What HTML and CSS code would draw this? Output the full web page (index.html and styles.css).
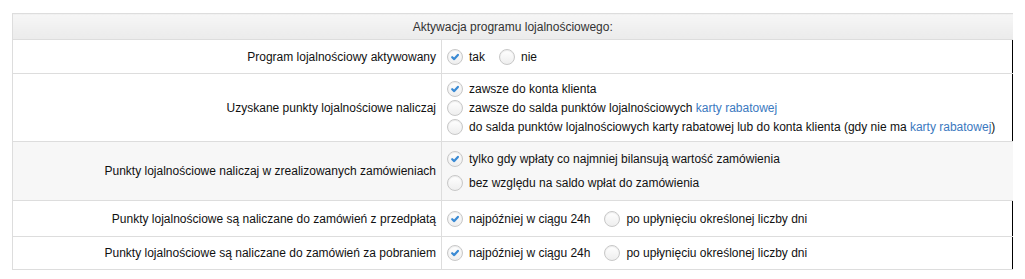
FILE: index.html
```html
<!DOCTYPE html>
<html lang="pl">
<head>
    <meta charset="UTF-8">
    <title>Program lojalnościowy</title>
    <link rel="stylesheet" href="styles.css">
</head>
<body>
    <div class="settings">
        <table class="settings-table">
            <colgroup>
                <col class="col-label">
                <col class="col-field">
            </colgroup>
            <tr class="head">
                <th colspan="2">Aktywacja programu lojalnościowego:</th>
            </tr>
            <tr class="row-1">
                <td class="label">Program lojalnościowy aktywowany</td>
                <td class="field">
                    <div class="inline">
                        <span class="opt"><span class="radio checked"><svg viewBox="0 0 10 10"><path d="M2.2 5.2 L4.2 7.1 L7.9 2.9"/></svg></span>tak</span>
                        <span class="opt"><span class="radio"></span>nie</span>
                    </div>
                </td>
            </tr>
            <tr class="row-2">
                <td class="label">Uzyskane punkty lojalnościowe naliczaj</td>
                <td class="field">
                    <div class="stack">
                        <span class="opt"><span class="radio checked"><svg viewBox="0 0 10 10"><path d="M2.2 5.2 L4.2 7.1 L7.9 2.9"/></svg></span>zawsze do konta klienta</span>
                        <span class="opt"><span class="radio"></span>zawsze do salda punktów lojalnościowych&nbsp;<a href="#">karty rabatowej</a></span>
                        <span class="opt"><span class="radio"></span>do salda punktów lojalnościowych karty rabatowej lub do konta klienta (gdy nie ma&nbsp;<a href="#">karty rabatowej</a>)</span>
                    </div>
                </td>
            </tr>
            <tr class="row-3 shaded">
                <td class="label">Punkty lojalnościowe naliczaj w zrealizowanych zamówieniach</td>
                <td class="field">
                    <div class="stack wide">
                        <span class="opt"><span class="radio checked"><svg viewBox="0 0 10 10"><path d="M2.2 5.2 L4.2 7.1 L7.9 2.9"/></svg></span>tylko gdy wpłaty co najmniej bilansują wartość zamówienia</span>
                        <span class="opt"><span class="radio"></span>bez względu na saldo wpłat do zamówienia</span>
                    </div>
                </td>
            </tr>
            <tr class="row-4">
                <td class="label">Punkty lojalnościowe są naliczane do zamówień z przedpłatą</td>
                <td class="field">
                    <div class="inline">
                        <span class="opt"><span class="radio checked"><svg viewBox="0 0 10 10"><path d="M2.2 5.2 L4.2 7.1 L7.9 2.9"/></svg></span>najpóźniej w ciągu 24h</span>
                        <span class="opt"><span class="radio"></span>po upłynięciu określonej liczby dni</span>
                    </div>
                </td>
            </tr>
            <tr class="row-5">
                <td class="label">Punkty lojalnościowe są naliczane do zamówień za pobraniem</td>
                <td class="field">
                    <div class="inline">
                        <span class="opt"><span class="radio checked"><svg viewBox="0 0 10 10"><path d="M2.2 5.2 L4.2 7.1 L7.9 2.9"/></svg></span>najpóźniej w ciągu 24h</span>
                        <span class="opt"><span class="radio"></span>po upłynięciu określonej liczby dni</span>
                    </div>
                </td>
            </tr>
        </table>
    </div>
</body>
</html>
```

FILE: styles.css
```css
body {
    font-family: "Liberation Sans", Arial, sans-serif;
    font-size: 12px;
    color: #111;
    margin: 0;
    padding: 13px 0 0 12px;
    background: #fff;
}
.settings {
    width: 1000px;
    border-right: 1px solid #000;
}
.settings-table {
    width: 1000px;
    border-collapse: collapse;
    table-layout: fixed;
}
.col-label {
    width: 429px;
}
.col-field {
    width: 571px;
}
.settings-table th,
.settings-table td {
    border: 1px solid #ddd;
    padding: 0;
}
.settings-table tr > :last-child {
    border-right: none;
}
.head th {
    height: 25px;
    font-weight: normal;
    color: #333;
    text-align: center;
    background: linear-gradient(#f6f6f6, #ebebeb);
}
.label {
    text-align: right;
    padding-right: 5px !important;
    vertical-align: middle;
}
.field {
    padding-left: 5px !important;
    vertical-align: middle;
}
.row-1 td { height: 33px; }
.row-2 td { height: 67px; }
.row-3 td { height: 58px; }
.row-4 td { height: 35px; }
.row-5 td { height: 32px; }
.shaded td {
    background: #f7f7f7;
}
.inline {
    display: flex;
    align-items: center;
    gap: 14px;
}
.stack {
    display: flex;
    flex-direction: column;
    gap: 3px;
}
.stack.wide {
    gap: 8px;
}
.opt {
    display: flex;
    align-items: center;
    height: 16px;
    white-space: nowrap;
}
.radio {
    box-sizing: border-box;
    width: 16px;
    height: 16px;
    margin-right: 6px;
    border: 1px solid #c8c8c8;
    border-radius: 50%;
    background: linear-gradient(#ffffff, #eeeeee);
    box-shadow: inset 0 1px 1px rgba(0, 0, 0, 0.08);
    display: flex;
    align-items: center;
    justify-content: center;
    flex-shrink: 0;
}
.radio svg {
    width: 10px;
    height: 10px;
}
.radio svg path {
    fill: none;
    stroke: #3a8ad4;
    stroke-width: 2.2;
    stroke-linecap: round;
    stroke-linejoin: round;
}
a {
    color: #3b79c0;
    text-decoration: none;
}
```
